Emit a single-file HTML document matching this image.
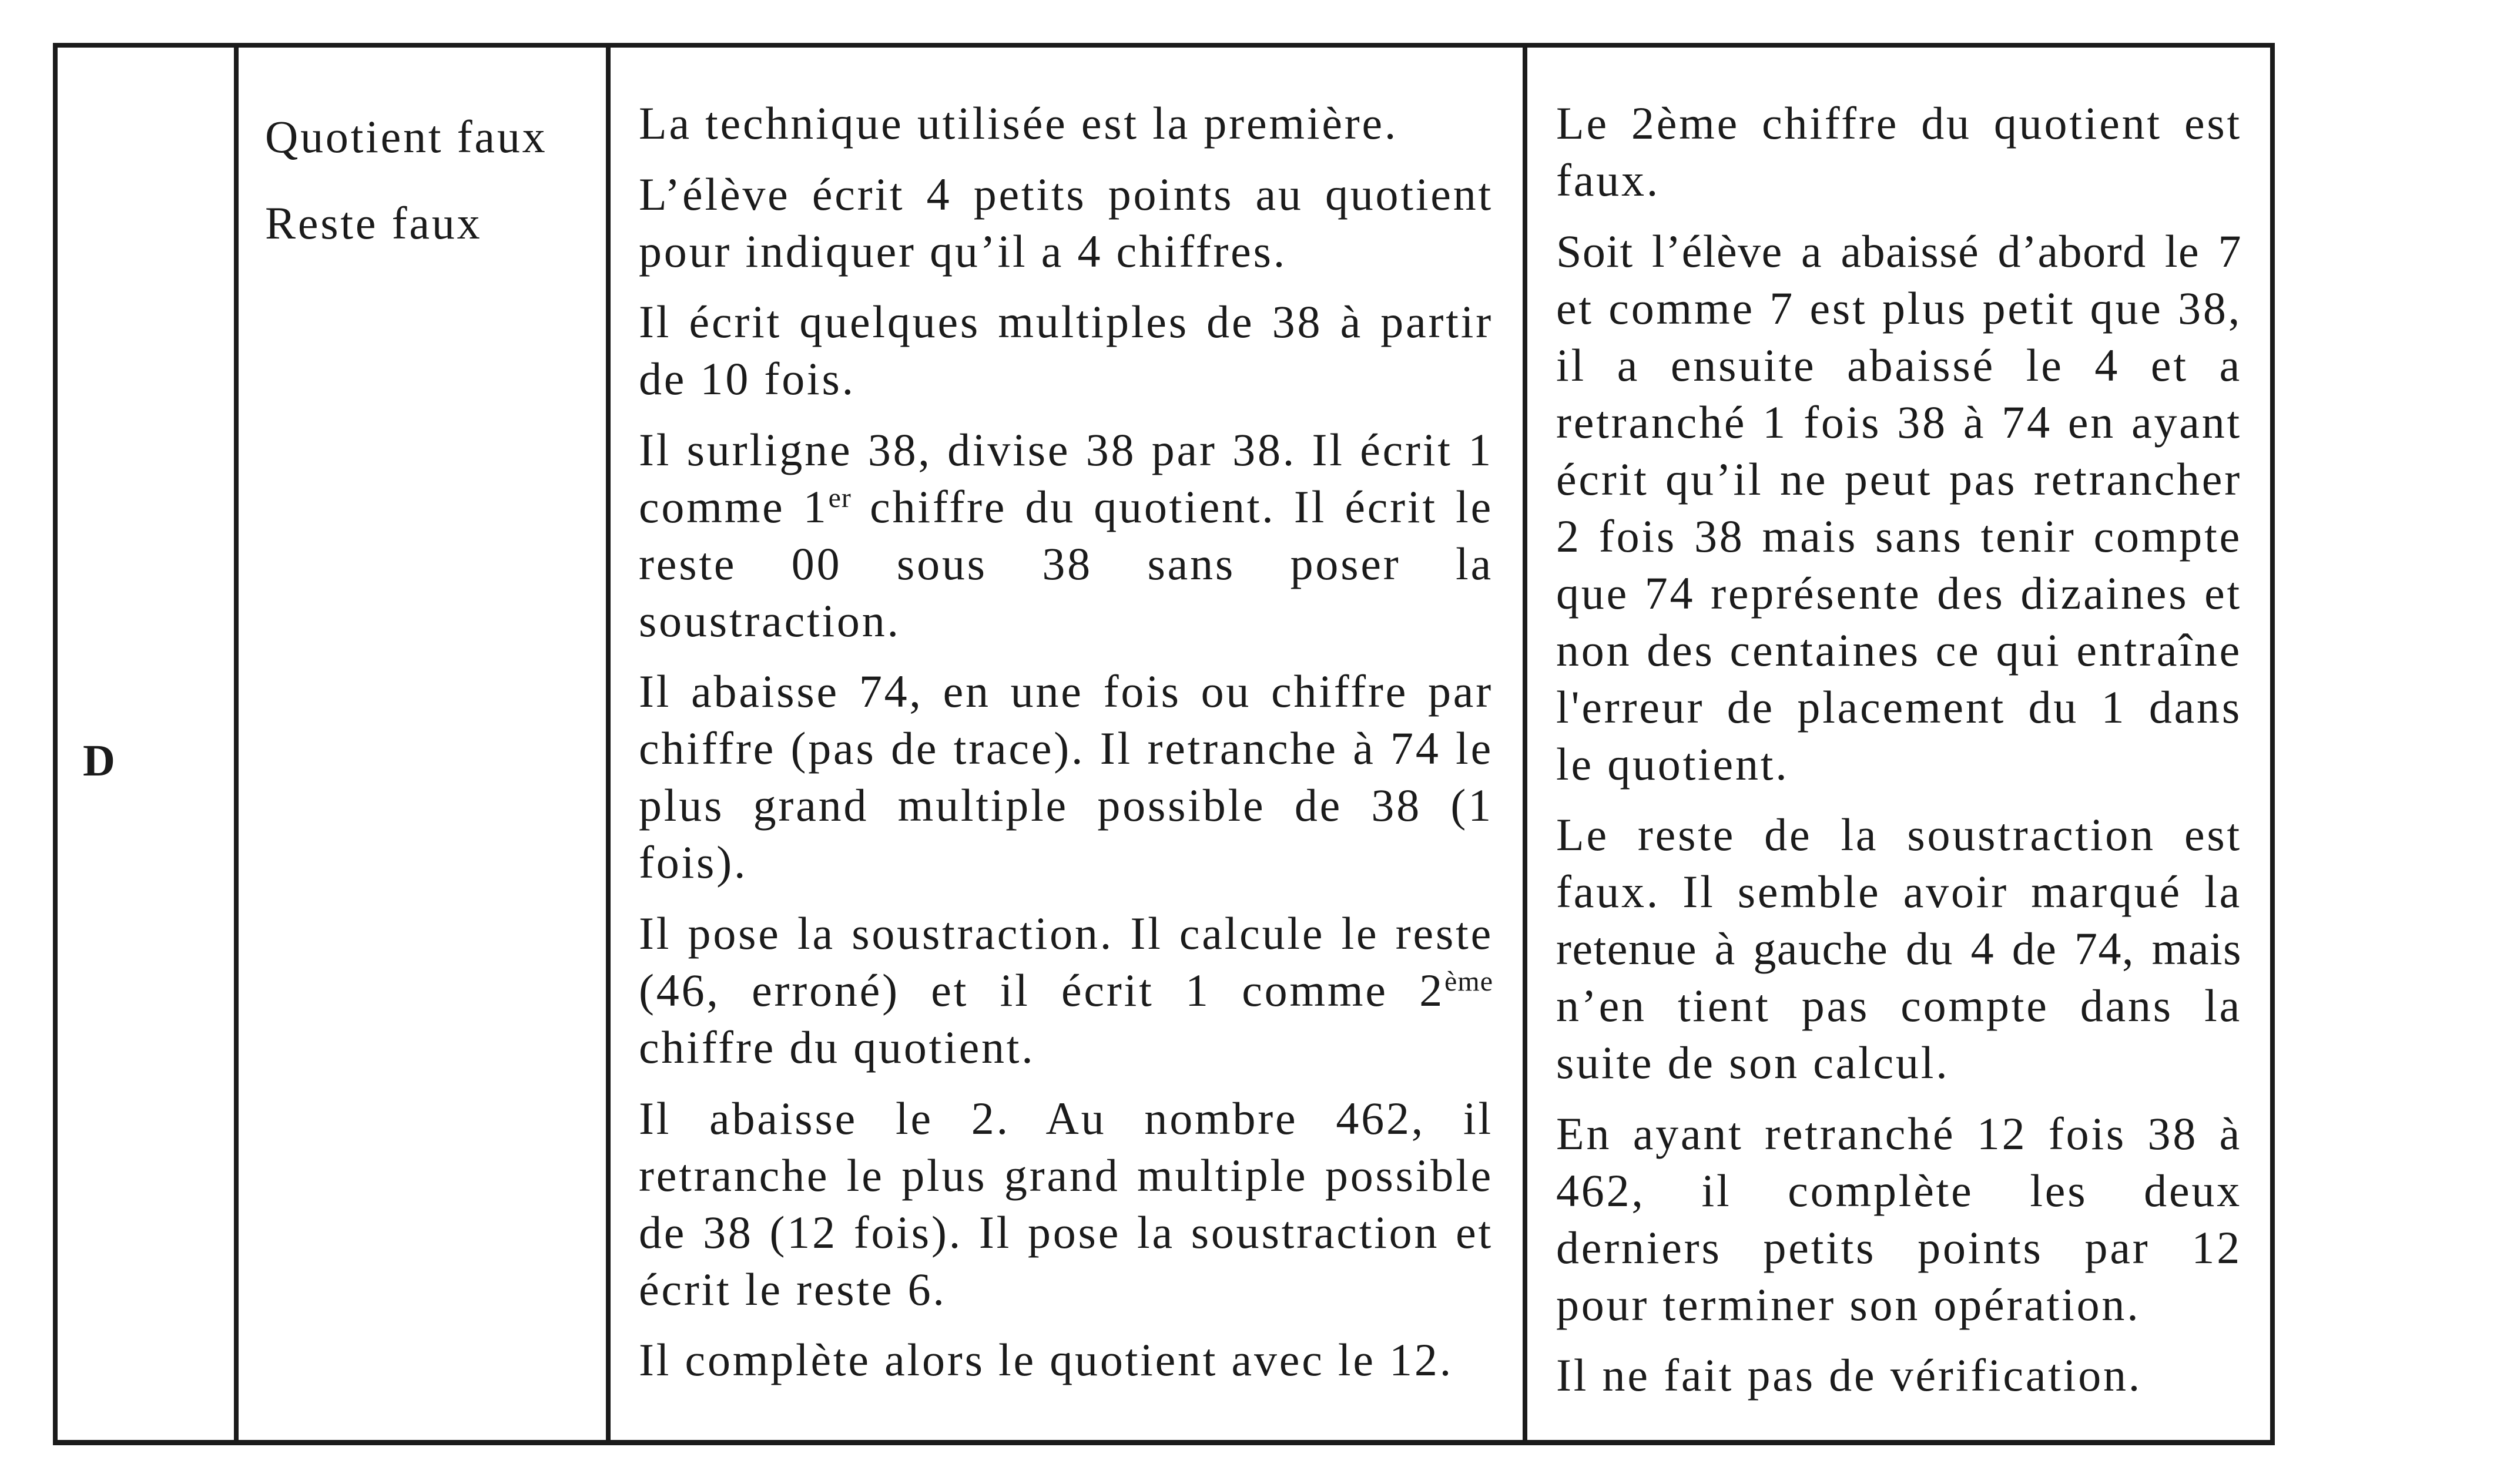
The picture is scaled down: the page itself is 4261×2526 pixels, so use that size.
<!DOCTYPE html>
<html><head><meta charset="utf-8"><style>
html,body{margin:0;padding:0;background:#fff;}
body{width:4261px;height:2526px;position:relative;overflow:hidden;font-family:"Liberation Serif",serif;color:#1b1b1b;}
.b{position:absolute;background:#1b1b1b;}
.col{position:absolute;font-size:78px;line-height:97px;letter-spacing:3.8px;}
.col div.l{white-space:nowrap;text-align:justify;text-align-last:justify;height:97px;}
.col div.e{white-space:nowrap;text-align:left;height:97px;}
.col div.t{letter-spacing:1.5px;}
.col .p{margin-bottom:23.6px;}
sup{font-size:48px;line-height:0;vertical-align:26px;letter-spacing:1px;}
</style></head><body>
<div class="b" style="left:90px;top:73px;width:3781px;height:8px"></div>
<div class="b" style="left:90px;top:2451px;width:3781px;height:9px"></div>
<div class="b" style="left:90px;top:73px;width:8px;height:2387px"></div>
<div class="b" style="left:3863px;top:73px;width:8px;height:2387px"></div>
<div class="b" style="left:398px;top:73px;width:8px;height:2387px"></div>
<div class="b" style="left:1031px;top:73px;width:8px;height:2387px"></div>
<div class="b" style="left:2591px;top:73px;width:8px;height:2387px"></div>

<div style="position:absolute;left:141px;top:1247px;font-size:76px;font-weight:bold;line-height:97px;">D</div>

<div class="col" style="left:451px;top:184px;width:520px;">
<div style="height:147px">Quotient faux</div>
<div>Reste faux</div>
</div>

<div class="col" style="left:1087px;top:161px;width:1454px;">
<div class="p"><div class="e">La technique utilisée est la première.</div></div>
<div class="p"><div class="l">L’élève écrit 4 petits points au quotient</div><div class="e">pour indiquer qu’il a 4 chiffres.</div></div>
<div class="p"><div class="l">Il écrit quelques multiples de 38 à partir</div><div class="e">de 10 fois.</div></div>
<div class="p"><div class="l">Il surligne 38, divise 38 par 38. Il écrit 1</div><div class="l">comme 1<sup>er</sup> chiffre du quotient. Il écrit le</div><div class="l">reste 00 sous 38 sans poser la</div><div class="e">soustraction.</div></div>
<div class="p"><div class="l">Il abaisse 74, en une fois ou chiffre par</div><div class="l">chiffre (pas de trace). Il retranche à 74 le</div><div class="l">plus grand multiple possible de 38 (1</div><div class="e">fois).</div></div>
<div class="p"><div class="l">Il pose la soustraction. Il calcule le reste</div><div class="l">(46, erroné) et il écrit 1 comme 2<sup>ème</sup></div><div class="e">chiffre du quotient.</div></div>
<div class="p"><div class="l">Il abaisse le 2. Au nombre 462, il</div><div class="l">retranche le plus grand multiple possible</div><div class="l">de 38 (12 fois). Il pose la soustraction et</div><div class="e">écrit le reste 6.</div></div>
<div class="p"><div class="e">Il complète alors le quotient avec le 12.</div></div>
</div>

<div class="col" style="left:2648px;top:161px;width:1167px;">
<div class="p"><div class="l">Le 2ème chiffre du quotient est</div><div class="e">faux.</div></div>
<div class="p"><div class="l t">Soit l’élève a abaissé d’abord le 7</div><div class="l">et comme 7 est plus petit que 38,</div><div class="l">il a ensuite abaissé le 4 et a</div><div class="l">retranché 1 fois 38 à 74 en ayant</div><div class="l">écrit qu’il ne peut pas retrancher</div><div class="l">2 fois 38 mais sans tenir compte</div><div class="l">que 74 représente des dizaines et</div><div class="l">non des centaines ce qui entraîne</div><div class="l">l'erreur de placement du 1 dans</div><div class="e">le quotient.</div></div>
<div class="p"><div class="l">Le reste de la soustraction est</div><div class="l">faux. Il semble avoir marqué la</div><div class="l t">retenue à gauche du 4 de 74, mais</div><div class="l">n’en tient pas compte dans la</div><div class="e">suite de son calcul.</div></div>
<div class="p"><div class="l">En ayant retranché 12 fois 38 à</div><div class="l">462, il complète les deux</div><div class="l">derniers petits points par 12</div><div class="e">pour terminer son opération.</div></div>
<div class="p"><div class="e">Il ne fait pas de vérification.</div></div>
</div>
</body></html>
